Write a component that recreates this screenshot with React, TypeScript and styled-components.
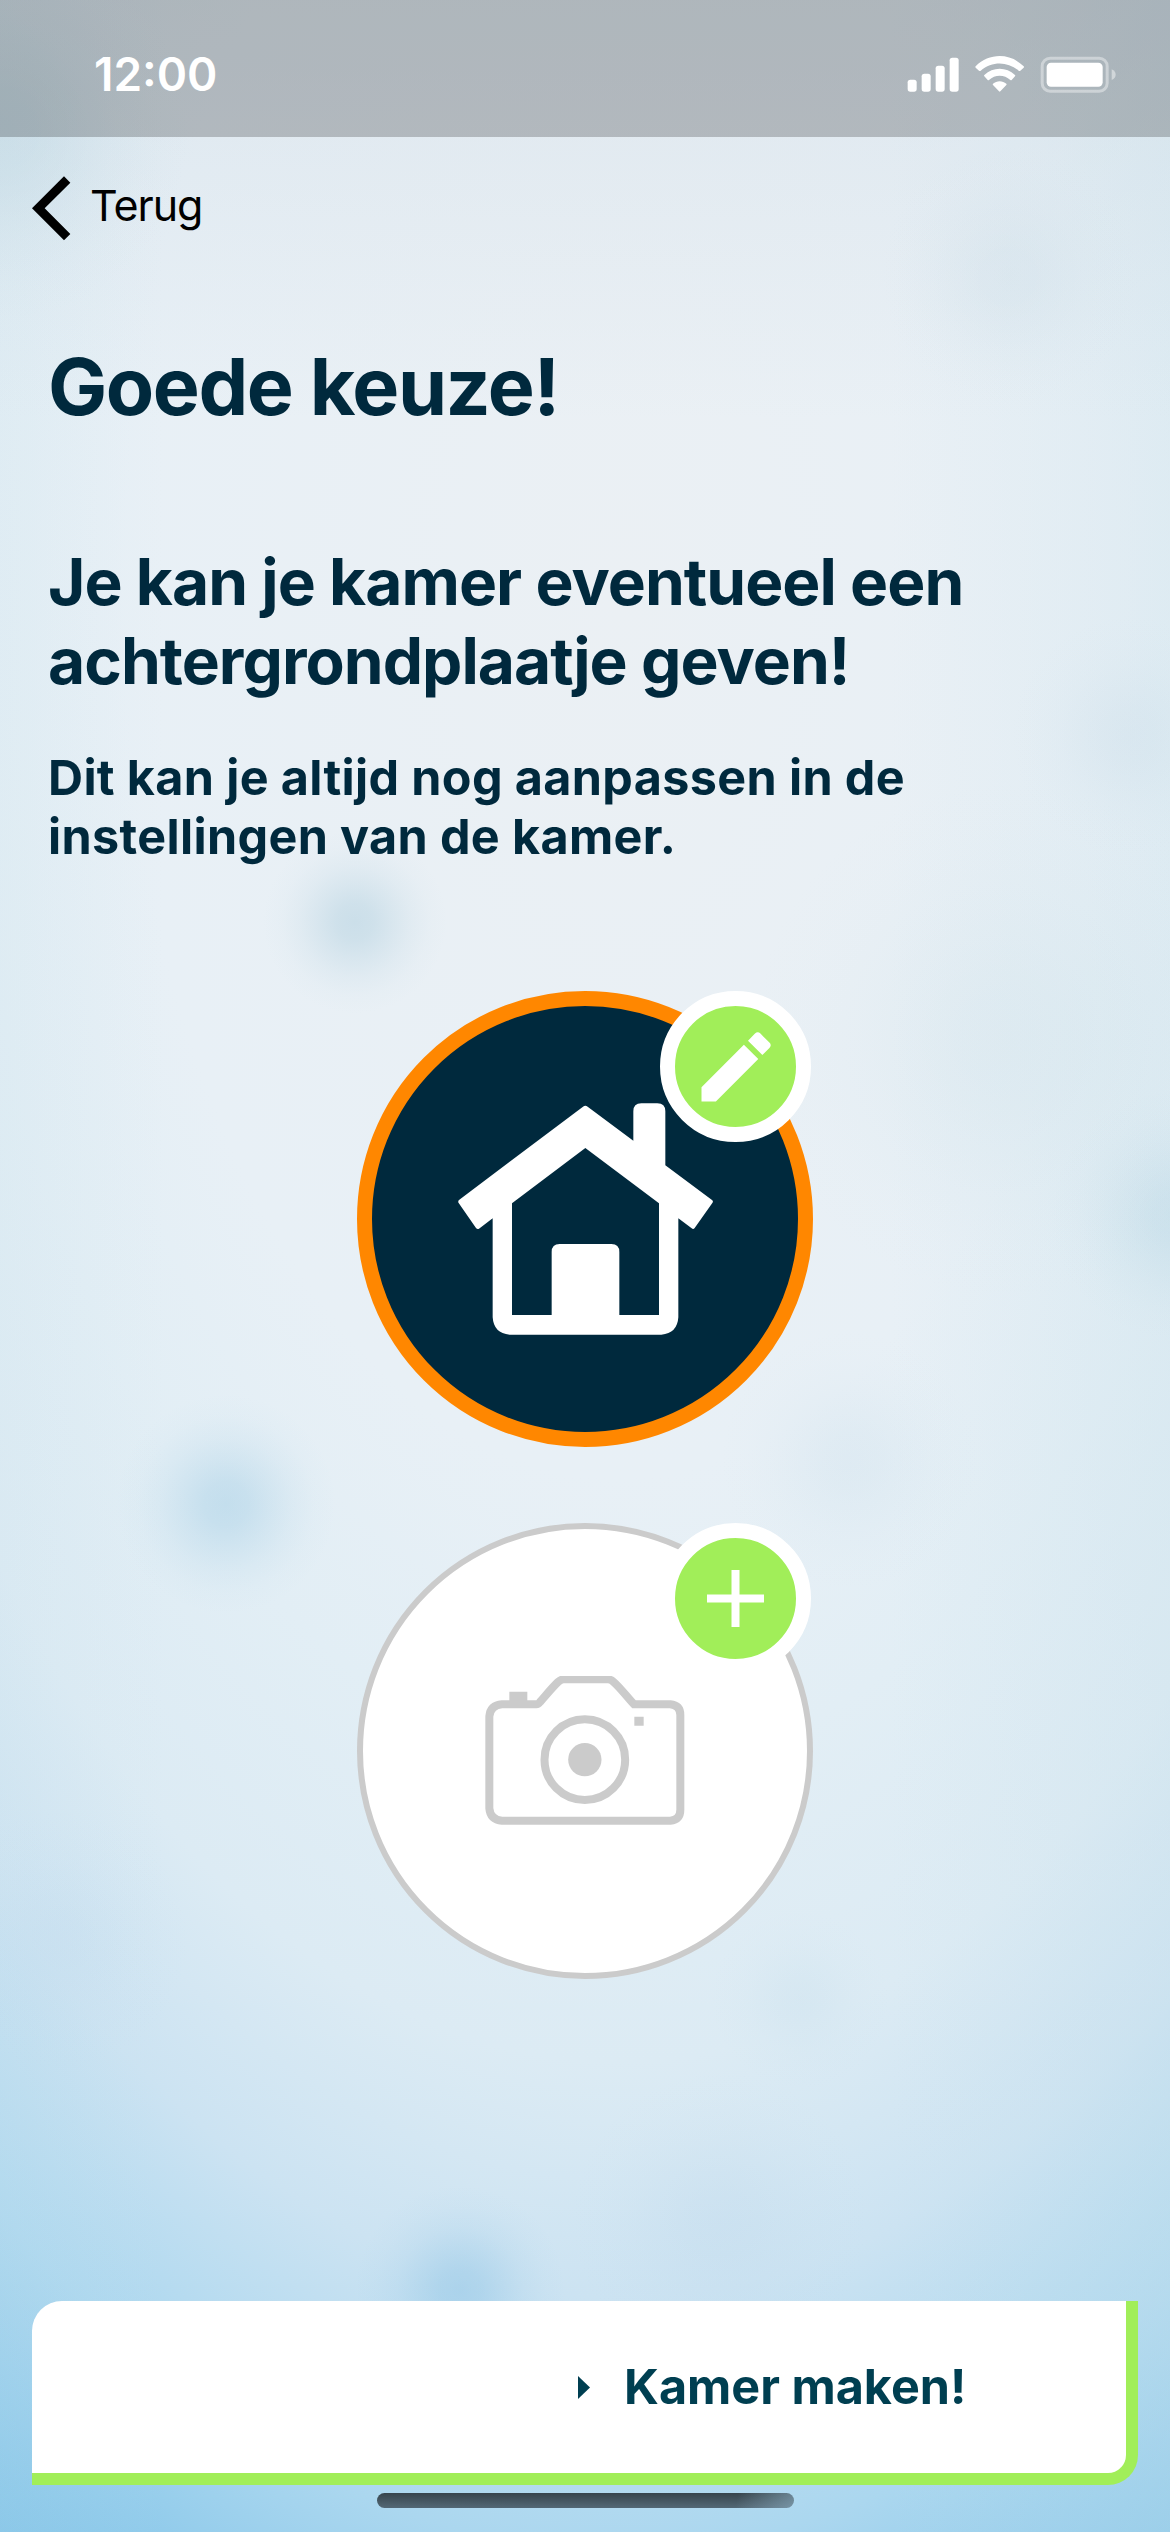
import React from "react";
import styled, { createGlobalStyle } from "styled-components";

const NAVY = "#00293d";
const LIME = "#a1ee59";

// Soft round smudge with a bell-shaped falloff.
const smudge = (x: number, y: number, radius: number, rgb: string, strength: number) =>
  `radial-gradient(circle ${radius}px at ${x}px ${y}px, ` +
  [1, 0.87, 0.57, 0.28, 0.09, 0]
    .map((level, i) => `rgba(${rgb}, ${(level * strength).toFixed(3)}) ${i * 20}%`)
    .join(", ") +
  ")";

const backdrop = [
  smudge(355, 922, 92, "150, 192, 212", 0.36),
  smudge(226, 1504, 110, "130, 188, 220", 0.32),
  smudge(460, 2290, 105, "110, 180, 222", 0.33),
  smudge(1175, 1215, 125, "150, 195, 215", 0.22),
  smudge(1130, 735, 120, "180, 205, 222", 0.16),
  smudge(0, 130, 190, "170, 203, 216", 0.3),
  smudge(1010, 275, 130, "195, 215, 226", 0.22),
  smudge(850, 1460, 130, "185, 212, 228", 0.18),
  smudge(800, 2000, 90, "180, 212, 230", 0.16),
  smudge(720, 2220, 150, "180, 208, 230", 0.18),
  smudge(60, 1940, 130, "180, 210, 235", 0.16),
  smudge(1010, 1040, 260, "195, 220, 228", 0.22),
  "linear-gradient(rgba(205, 218, 228, 0.38), rgba(205, 218, 228, 0) 420px)",
  "linear-gradient(90deg, rgba(205, 226, 235, 0.2), transparent 14%, transparent 76%, rgba(205, 226, 235, 0.32))",
  "radial-gradient(ellipse 1100px 1950px at 620px 600px, #ebf0f4 0, #e8f0f6 45%, #e2eef5 60%, #dcebf4 75%, #cce3f2 87%, #abd7ef 100%, #7cc2e8 114%)",
].join(",\n");

const GlobalStyle = createGlobalStyle`
  *, *::before, *::after { box-sizing: border-box; }
  body { margin: 0; background: #e3ecf3; }
  h1, h2, p { margin: 0; }
  svg { display: block; flex: none; }
  button { font: inherit; border: 0; padding: 0; background: none; }
`;

const Screen = styled.div`
  width: 1170px;
  height: 2532px;
  display: flex;
  flex-direction: column;
  overflow: hidden;
  font-family: Inter, "Liberation Sans", sans-serif;
  color: ${NAVY};
  background: ${backdrop};
`;

const StatusBar = styled.header`
  height: 137px;
  padding: 11px 53px 0 94px;
  display: flex;
  align-items: center;
  justify-content: space-between;
  color: #fff;
  background: rgba(0, 0, 0, 0.213);
`;

const Clock = styled.time`
  font-size: 46px;
  line-height: 46px;
  font-weight: 600;
`;

const BackButton = styled.button`
  align-self: flex-start;
  margin: 39px 0 0 32px;
  display: flex;
  align-items: center;
  gap: 19px;
  color: #000;
  font-size: 43px;
  line-height: 52px;
  letter-spacing: -1px;
`;

const BackLabel = styled.span`
  padding-bottom: 8px;
`;

const Intro = styled.section`
  padding: 97px 48px 0;
  display: flex;
  flex-direction: column;
`;

const Title = styled.h1`
  font-size: 79px;
  line-height: 96px;
  font-weight: 700;
  letter-spacing: -1.45px;
`;

const Lead = styled.h2`
  margin-top: 108px;
  font-size: 64px;
  line-height: 79px;
  font-weight: 700;
  letter-spacing: -0.95px;
`;

const Note = styled.p`
  margin-top: 48px;
  font-size: 48.5px;
  line-height: 59px;
  font-weight: 700;
  letter-spacing: 0.35px;
`;

const Choices = styled.section`
  margin-top: 125px;
  display: flex;
  flex-direction: column;
  align-items: center;
  gap: 76px;
`;

const Choice = styled.div<{ $ring: string; $ringWidth: number; $fill: string }>`
  position: relative;
  width: 456px;
  height: 456px;
  display: flex;
  align-items: center;
  justify-content: center;
  border: ${(p) => p.$ringWidth}px solid ${(p) => p.$ring};
  border-radius: 50%;
  background: ${(p) => p.$fill};
`;

const Badge = styled.button<{ $inset: number }>`
  position: absolute;
  top: ${(p) => -p.$inset}px;
  right: ${(p) => 2 - p.$inset}px;
  width: 151px;
  height: 151px;
  display: flex;
  align-items: center;
  justify-content: center;
  border: 15px solid #fff;
  border-radius: 50%;
  background: ${LIME};
`;

const Footer = styled.footer`
  margin-top: auto;
  padding: 0 32px 24px;
  display: flex;
  flex-direction: column;
  align-items: center;
  gap: 8px;
`;

const SubmitButton = styled.button`
  width: 1106px;
  height: 184px;
  padding-left: 546px;
  display: flex;
  align-items: center;
  gap: 34px;
  border-right: 12px solid ${LIME};
  border-bottom: 12px solid ${LIME};
  border-radius: 30px 0 30px 0;
  background: #fff;
  color: #003f51;
  font-size: 48.5px;
  line-height: 58px;
  font-weight: 700;
`;

const HomeIndicator = styled.div`
  width: 417px;
  height: 15px;
  border-radius: 8px;
  background:
    linear-gradient(100deg, transparent 86%, rgba(150, 185, 205, 0.55)),
    linear-gradient(#37444d, #536875);
`;

const StatusIcons = () => (
  <svg width="210" height="38" viewBox="0 0 630 114" fill="#fff">
    <rect x="2" y="74" width="27" height="36" rx="8" />
    <rect x="44" y="56" width="27" height="54" rx="8" />
    <rect x="86" y="32" width="27" height="78" rx="8" />
    <rect x="128" y="8" width="27" height="102" rx="8" />
    <path d="M206 34C246-7 310-7 350 34Q352 36 350 38L340 47Q337 49 335 47C301 18 255 18 221 47Q219 49 216 47L206 38Q204 36 206 34Z" />
    <path d="M232 60C258 35 298 35 324 60Q326 62 324 64L314 75Q312 77 310 75C292 58 264 58 246 75Q244 77 242 75L232 64Q230 62 232 60Z" />
    <path d="M258 86C269 76 287 76 298 86Q300 88 298 90L280 109Q278 111 276 109L258 90Q256 88 258 86Z" />
    <rect x="405.500" y="9.500" width="195" height="99" rx="24" fill="none" stroke="#fff" strokeOpacity=".4" strokeWidth="9" />
    <rect x="419" y="23" width="168" height="72" rx="13" />
    <path d="M614 43Q626 49 626 59T614 75Z" fillOpacity=".45" />
  </svg>
);

const BackArrow = () => (
  <svg width="39" height="65" viewBox="95 529 117 195">
    <path d="M95 626 191 530 210 549 133 626 210 703 191 722Z" />
  </svg>
);

const House = () => (
  <svg width="255" height="232" viewBox="350 397 765 696" fill="#fff">
    <path
      fillRule="evenodd"
      d="M725 408Q732 402 739 408L876 510V422Q876 398 900 398H948Q972 398 972 422V584L1112 688Q1117 692 1113 697L1060 772Q1056 777 1051 773L1011 743V1040Q1008 1088 960 1092H505Q457 1088 454 1040V743L413 774Q408 777 404 772L352 697Q349 692 353 688ZM732 532 512 698V1033H631V844Q631 820 655 820H810Q834 820 834 844V1033H953V698Z"
    />
  </svg>
);

const Pencil = () => (
  <svg width="92" height="92" viewBox="0 0 24 24" fill="#fff">
    <path d="M3 17.250V21h3.750L17.810 9.940l-3.750-3.750L3 17.250zM20.710 7.040a.996.996 0 0 0 0-1.410l-2.340-2.340a.996.996 0 0 0-1.410 0l-1.830 1.830 3.750 3.750 1.830-1.830z" />
  </svg>
);

const Plus = () => (
  <svg width="57" height="57" viewBox="0 0 57 57" fill="#fff">
    <path d="M24.500 0h8v24.500H57v8H32.500V57h-8V32.500H0v-8h24.500Z" />
  </svg>
);

const Camera = () => (
  <svg width="200" height="150" viewBox="434 529 600 450" fill="#cbcbcb">
    <path
      fill="none"
      stroke="#cbcbcb"
      strokeWidth="24"
      d="M485 614H588Q594 614 599 607C620 583 637 562 653 547Q662 539 670 539H802Q811 539 819 546C838 562 857 588 881 614H990Q1020 617 1020 646V930Q1020 960 990 963H485Q450 960 447 926V650Q450 617 485 614Z"
    />
    <path d="M507 576H561V608H507ZM882 651H910V678H882Z" />
    <circle cx="733.500" cy="780" r="121" fill="none" stroke="#cbcbcb" strokeWidth="24" />
    <circle cx="733.500" cy="780" r="50" />
  </svg>
);

const Triangle = () => (
  <svg width="12" height="23" viewBox="0 0 12 23" fill="#003f51">
    <path d="M0 0 12 11.500 0 23Z" />
  </svg>
);

export default function App() {
  return (
    <>
      <GlobalStyle />
      <Screen>
        <StatusBar>
          <Clock>12:00</Clock>
          <StatusIcons />
        </StatusBar>
        <BackButton>
          <BackArrow />
          <BackLabel>Terug</BackLabel>
        </BackButton>
        <Intro>
          <Title>Goede keuze!</Title>
          <Lead>
            Je kan je kamer eventueel een
            <br />
            achtergrondplaatje geven!
          </Lead>
          <Note>
            Dit kan je altijd nog aanpassen in de
            <br />
            instellingen van de kamer.
          </Note>
        </Intro>
        <Choices>
          <Choice $ring="#ff8700" $ringWidth={15} $fill={NAVY}>
            <House />
            <Badge $inset={15} aria-label="Bewerken">
              <Pencil />
            </Badge>
          </Choice>
          <Choice $ring="#cbcbcb" $ringWidth={6} $fill="#fff">
            <Camera />
            <Badge $inset={6} aria-label="Toevoegen">
              <Plus />
            </Badge>
          </Choice>
        </Choices>
        <Footer>
          <SubmitButton>
            <Triangle />
            Kamer maken!
          </SubmitButton>
          <HomeIndicator />
        </Footer>
      </Screen>
    </>
  );
}
